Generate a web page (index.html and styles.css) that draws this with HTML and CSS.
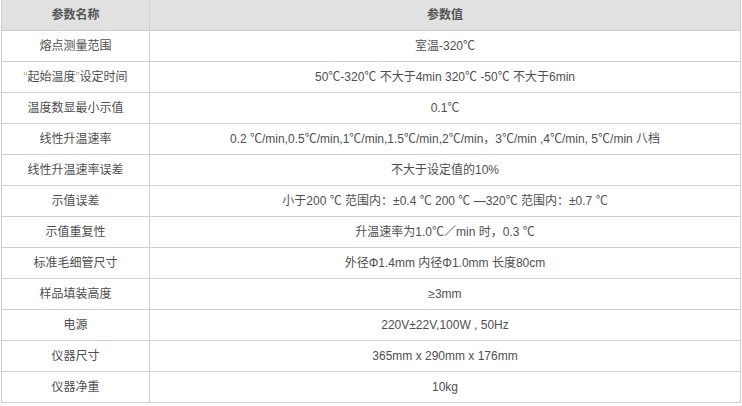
FILE: index.html
```html
<!DOCTYPE html>
<html lang="zh-CN">
<head>
<meta charset="utf-8">
<title>参数</title>
<link rel="stylesheet" href="styles.css">
</head>
<body>
<table class="spec">
  <colgroup><col class="c-name"><col class="c-val"></colgroup>
  <thead>
    <tr><th>参数名称</th><th>参数值</th></tr>
  </thead>
  <tbody>
    <tr><td>熔点测量范围</td><td>室温-320℃</td></tr>
    <tr><td><span class="q">“</span>起始温度<span class="q">”</span>设定时间</td><td>50℃-320℃ 不大于4min 320℃ -50℃ 不大于6min</td></tr>
    <tr><td>温度数显最小示值</td><td>0.1℃</td></tr>
    <tr><td>线性升温速率</td><td>0.2 ℃/min,0.5℃/min,1℃/min,1.5℃/min,2℃/min，3℃/min ,4℃/min, 5℃/min 八档</td></tr>
    <tr><td>线性升温速率误差</td><td>不大于设定值的10%</td></tr>
    <tr><td>示值误差</td><td>小于200 ℃ 范围内：±0.4 ℃ 200 ℃ —320℃ 范围内：±0.7 ℃</td></tr>
    <tr><td>示值重复性</td><td>升温速率为1.0℃／min 时，0.3 ℃</td></tr>
    <tr><td>标准毛细管尺寸</td><td>外径Φ1.4mm 内径Φ1.0mm 长度80cm</td></tr>
    <tr><td>样品填装高度</td><td>≥3mm</td></tr>
    <tr><td>电源</td><td>220V±22V,100W , 50Hz</td></tr>
    <tr><td>仪器尺寸</td><td>365mm x 290mm x 176mm</td></tr>
    <tr><td>仪器净重</td><td>10kg</td></tr>
  </tbody>
</table>
</body>
</html>
```
FILE: styles.css
```css
html, body {
  margin: 0;
  padding: 0;
  background: #fff;
}
body {
  font-family: "Liberation Sans", "Noto Sans CJK SC", sans-serif;
  font-size: 12px;
  color: #4f4f4f;
}
.spec {
  border-collapse: collapse;
  width: 740px;
  margin-left: 1px;
  table-layout: fixed;
}
.c-name { width: 148px; }
.spec th,
.spec td {
  border: 1px solid #cfcfcf;
  text-align: center;
  vertical-align: middle;
  padding: 0 4px;
  height: 30px;
  box-sizing: border-box;
  white-space: nowrap;
  line-height: 16px;
}
.spec thead th {
  background: #e1e1e1;
  color: #555;
  font-weight: bold;
  font-size: 12px;
  border-top: none;
  height: 30px;
}
.spec tbody td {
  height: 31px;
}
.q {
  color: #c8a060;
}
```
